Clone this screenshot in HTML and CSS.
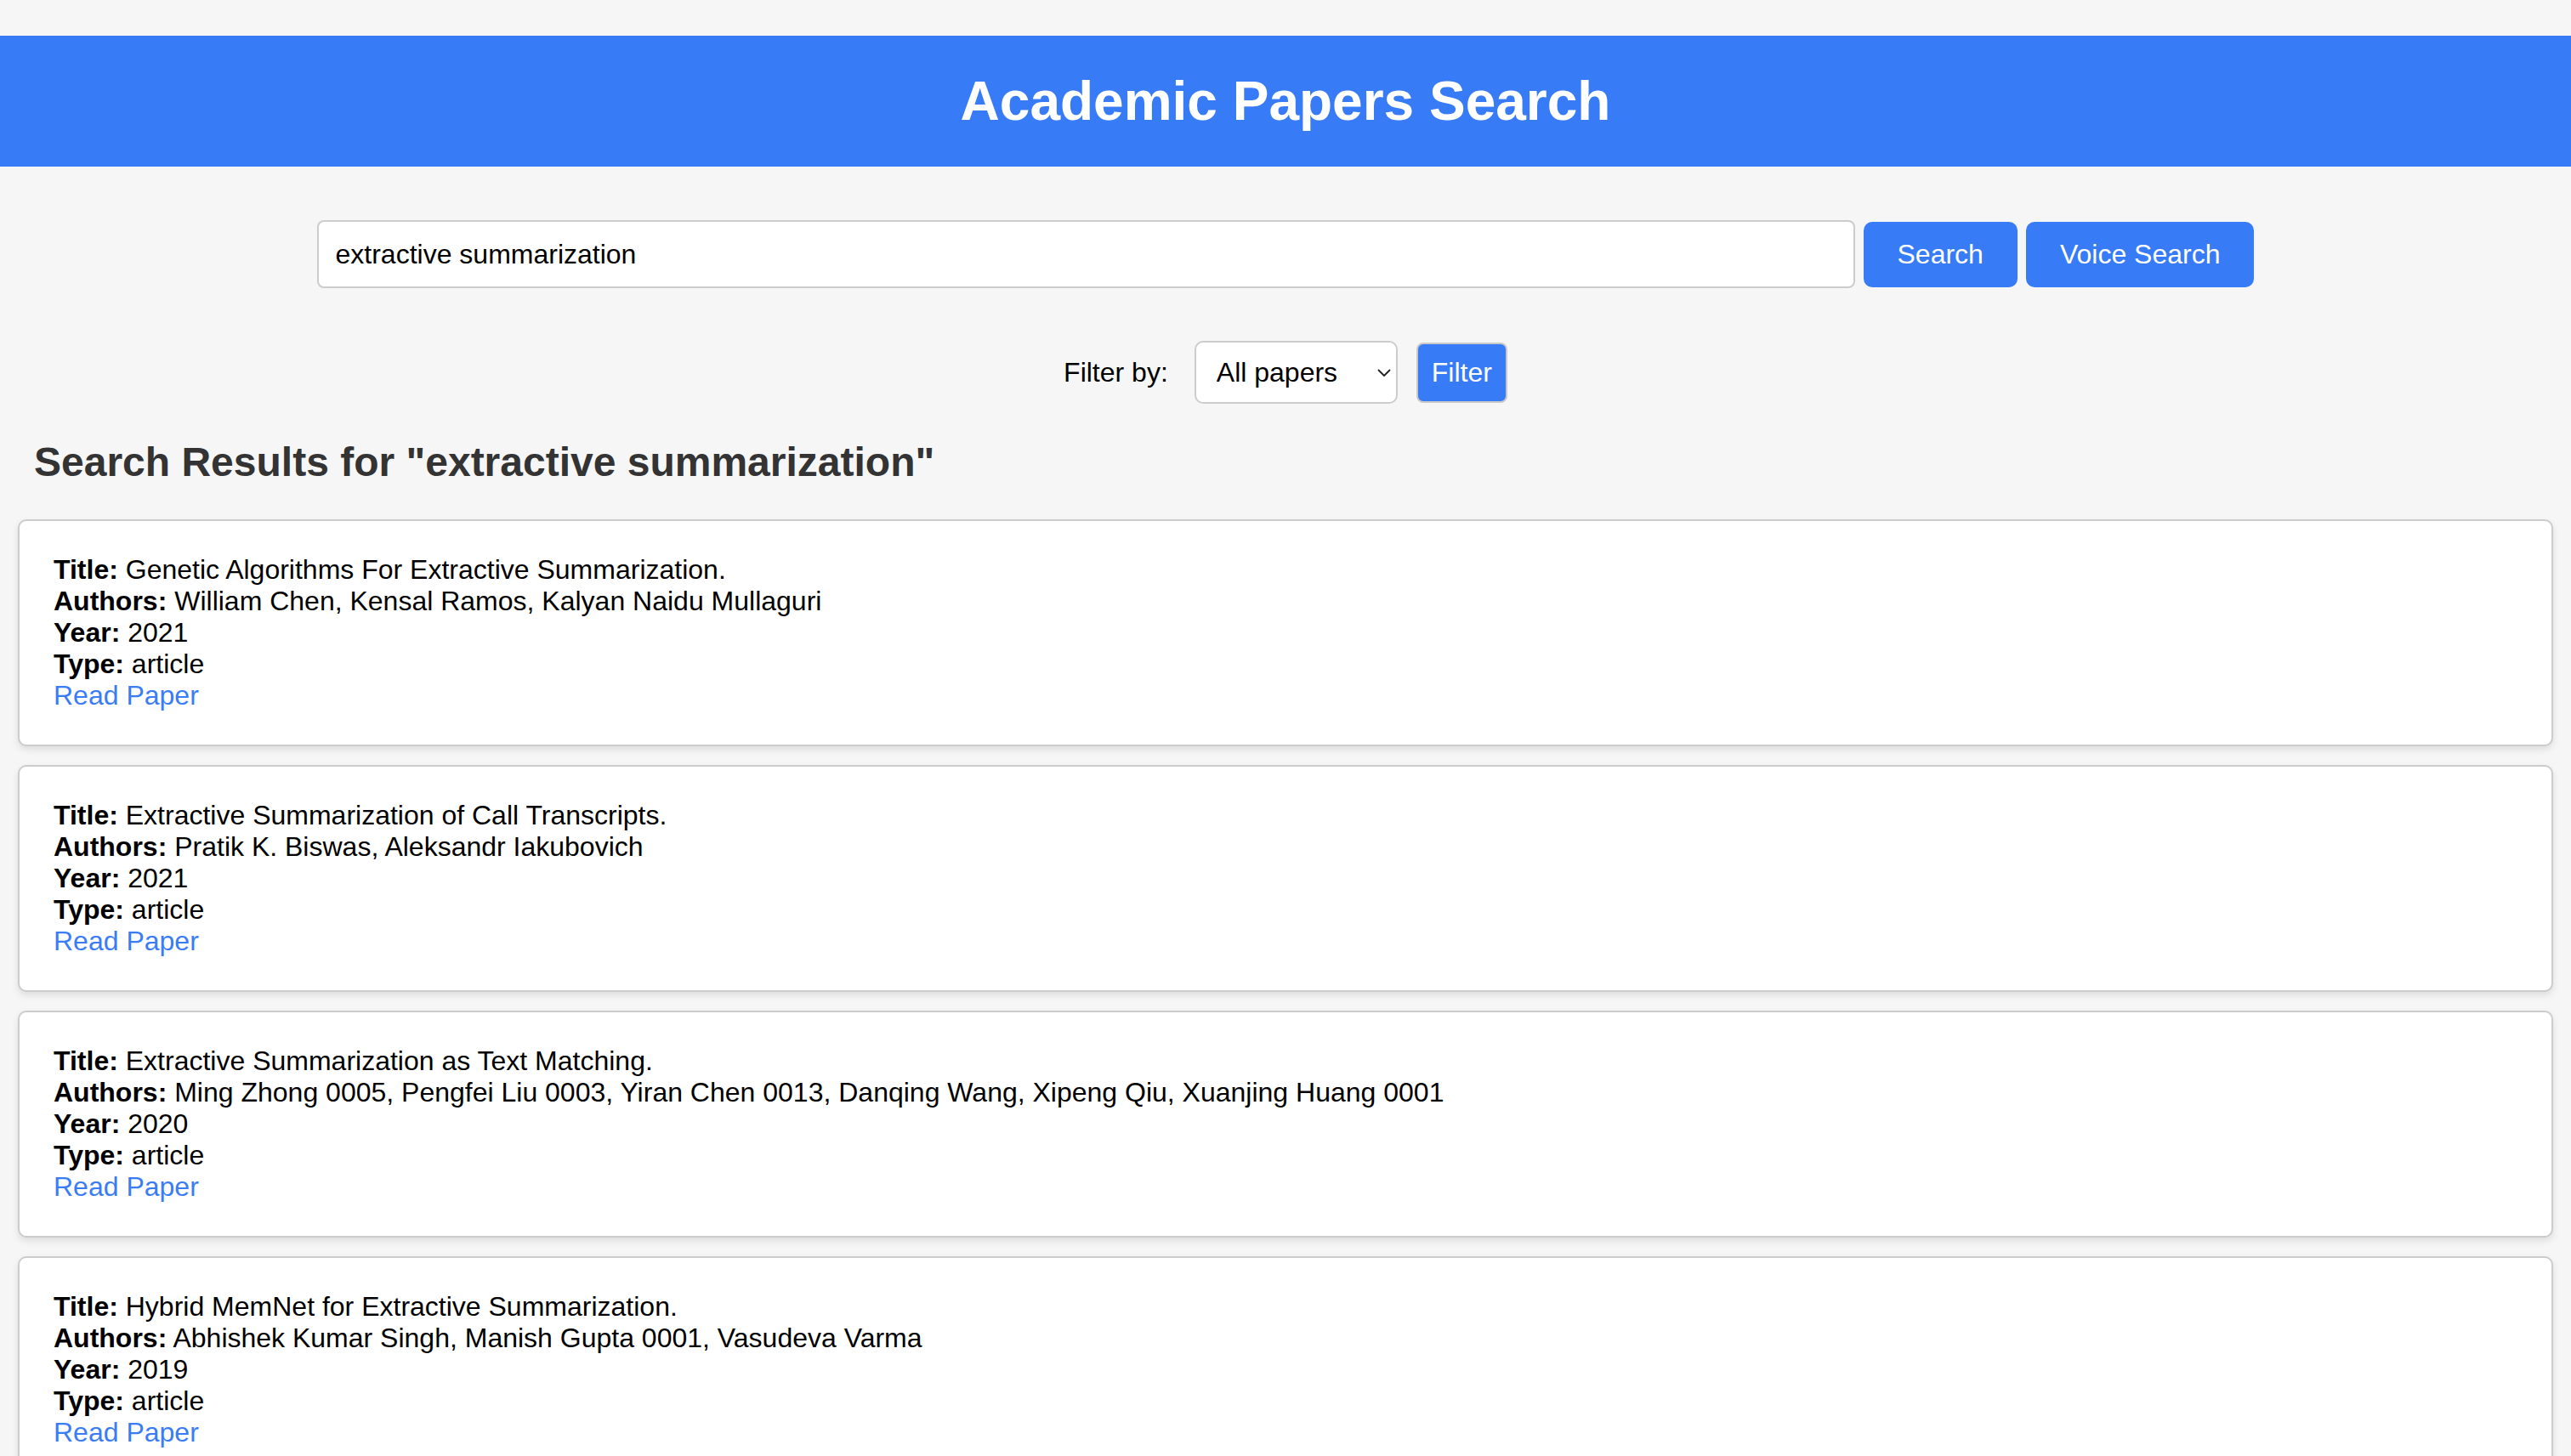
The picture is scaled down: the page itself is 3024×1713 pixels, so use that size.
FILE: index.html
```html
<!DOCTYPE html>
<html lang="en">
<head>
<meta charset="utf-8">
<title>Academic Papers Search</title>
<link rel="stylesheet" href="styles.css">
</head>
<body>
<header class="site-header">
  <h1 class="site-title">Academic Papers Search</h1>
</header>

<section class="search-row">
  <input class="search-input" type="text" value="extractive summarization">
  <button class="btn">Search</button>
  <button class="btn">Voice Search</button>
</section>

<section class="filter-row">
  <label class="filter-label">Filter by:</label>
  <div class="select-wrap">
    <select class="filter-select">
      <option>All papers</option>
    </select>
    <svg class="chevron" viewBox="0 0 16 10" width="16" height="10"><path d="M1.5 1.5 L8 8 L14.5 1.5" fill="none" stroke="#222" stroke-width="1.8" stroke-linecap="round" stroke-linejoin="round"/></svg>
  </div>
  <button class="btn-filter">Filter</button>
</section>

<main class="results">
  <h2 class="results-heading">Search Results for "extractive summarization"</h2>

  <article class="card">
    <div class="line"><strong>Title:</strong> Genetic Algorithms For Extractive Summarization.</div>
    <div class="line"><strong>Authors:</strong> William Chen, Kensal Ramos, Kalyan Naidu Mullaguri</div>
    <div class="line"><strong>Year:</strong> 2021</div>
    <div class="line"><strong>Type:</strong> article</div>
    <div class="line"><a class="link" href="#">Read Paper</a></div>
  </article>

  <article class="card">
    <div class="line"><strong>Title:</strong> Extractive Summarization of Call Transcripts.</div>
    <div class="line"><strong>Authors:</strong> Pratik K. Biswas, Aleksandr Iakubovich</div>
    <div class="line"><strong>Year:</strong> 2021</div>
    <div class="line"><strong>Type:</strong> article</div>
    <div class="line"><a class="link" href="#">Read Paper</a></div>
  </article>

  <article class="card">
    <div class="line"><strong>Title:</strong> Extractive Summarization as Text Matching.</div>
    <div class="line"><strong>Authors:</strong> Ming Zhong 0005, Pengfei Liu 0003, Yiran Chen 0013, Danqing Wang, Xipeng Qiu, Xuanjing Huang 0001</div>
    <div class="line"><strong>Year:</strong> 2020</div>
    <div class="line"><strong>Type:</strong> article</div>
    <div class="line"><a class="link" href="#">Read Paper</a></div>
  </article>

  <article class="card">
    <div class="line"><strong>Title:</strong> Hybrid MemNet for Extractive Summarization.</div>
    <div class="line"><strong>Authors:</strong> Abhishek Kumar Singh, Manish Gupta 0001, Vasudeva Varma</div>
    <div class="line"><strong>Year:</strong> 2019</div>
    <div class="line"><strong>Type:</strong> article</div>
    <div class="line"><a class="link" href="#">Read Paper</a></div>
  </article>
</main>
</body>
</html>
```

FILE: styles.css
```css
* { box-sizing: border-box; }

body {
  margin: 0;
  background: #f6f6f6;
  font-family: "Liberation Sans", Arial, Helvetica, sans-serif;
  font-size: 32px;
  color: #000;
}

.site-header {
  margin-top: 42px;
  background: #377bf6;
  padding: 40px 0;
}

.site-title {
  margin: 0;
  color: #fff;
  text-align: center;
  font-size: 64px;
  font-weight: bold;
  line-height: 74px;
}

.search-row {
  display: flex;
  justify-content: center;
  align-items: center;
  gap: 10px;
  margin-top: 63px;
}

.search-input {
  width: 1809px;
  height: 80px;
  padding: 0 20px;
  border: 2px solid #cccccc;
  border-radius: 8px;
  background: #fff;
  font-family: inherit;
  font-size: 32px;
  color: #000;
  outline: none;
}

.btn {
  height: 77px;
  padding: 0 40px;
  border: none;
  border-radius: 10px;
  background: #377bf6;
  color: #fff;
  font-family: inherit;
  font-size: 32px;
  cursor: pointer;
}

.filter-row {
  display: flex;
  justify-content: center;
  align-items: center;
  margin-top: 62px;
}

.filter-label {
  font-size: 32px;
  margin-right: 31px;
}

.select-wrap {
  position: relative;
  margin-right: 22px;
}

.filter-select {
  appearance: none;
  -webkit-appearance: none;
  width: 239px;
  height: 74px;
  padding: 0 0 0 24px;
  border: 2px solid #cccccc;
  border-radius: 10px;
  background: #fff;
  font-family: inherit;
  font-size: 32px;
  color: #000;
}

.chevron {
  position: absolute;
  right: 8px;
  top: 33px;
  width: 16px;
  height: 10px;
  pointer-events: none;
}

.btn-filter {
  height: 71px;
  padding: 0 16px;
  border: 2px solid #c9c9c9;
  border-radius: 8px;
  background: #377bf6;
  color: #fff;
  font-family: inherit;
  font-size: 32px;
}

.results {
  padding: 0 21px;
}

.results-heading {
  margin: 41px 0 40px 19px;
  font-size: 48px;
  font-weight: bold;
  line-height: 55px;
  color: #333;
}

.card {
  background: #fff;
  border: 2px solid #cccccc;
  border-radius: 10px;
  box-shadow: 0 4px 8px rgba(0, 0, 0, 0.1);
  padding: 39px 40px 39px;
  margin-bottom: 22px;
}

.line {
  line-height: 37px;
}

.line strong { font-weight: bold; }

.link {
  color: #3a7cf5;
  text-decoration: none;
}
```
